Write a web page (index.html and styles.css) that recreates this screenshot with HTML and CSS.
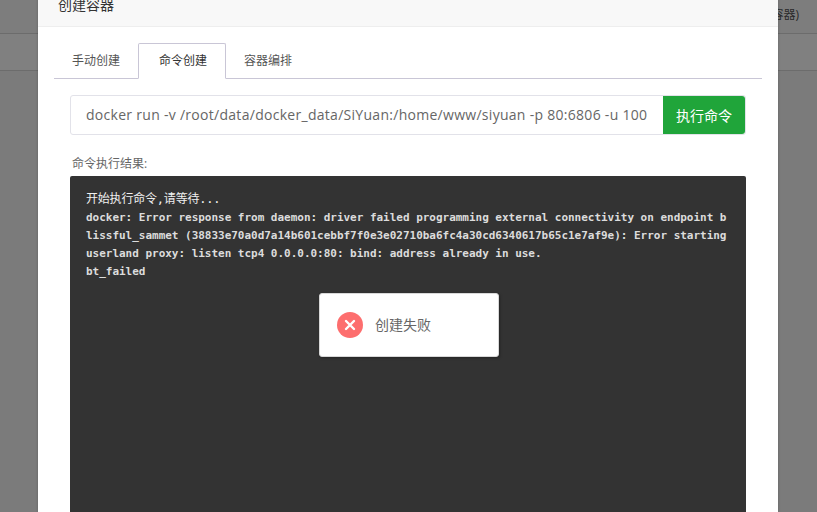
FILE: index.html
```html
<!DOCTYPE html>
<html lang="zh">
<head>
<meta charset="utf-8">
<title>创建容器</title>
<link rel="stylesheet" href="styles.css">
</head>
<body>
<div class="page">
  <div class="bg-row bg-top"><span class="bg-text">容器)</span></div>
  <div class="bg-row bg-mid"></div>
  <div class="bg-row bg-rest"></div>
</div>
<div class="modal">
  <header class="modal-head">创建容器</header>
  <div class="modal-body">
    <nav class="tabs">
      <span class="tab">手动创建</span>
      <span class="tab active">命令创建</span>
      <span class="tab">容器编排</span>
    </nav>
    <div class="cmd">
      <div class="cmd-input">docker run -v /root/data/docker_data/SiYuan:/home/www/siyuan -p 80:6806 -u 100</div>
      <button class="cmd-btn">执行命令</button>
    </div>
    <div class="result-label">命令执行结果:</div>
    <pre class="console"><span class="first">开始执行命令,请等待...</span>
docker: Error response from daemon: driver failed programming external connectivity on endpoint b
lissful_sammet (38833e70a0d7a14b601cebbf7f0e3e02710ba6fc4a30cd6340617b65c1e7af9e): Error starting
userland proxy: listen tcp4 0.0.0.0:80: bind: address already in use.
bt_failed</pre>
  </div>
</div>
<div class="toast">
  <svg class="toast-icon" viewBox="0 0 26 26" width="26" height="26">
    <circle cx="13" cy="13" r="13" fill="#fd6e6e"/>
    <path d="M9 9l8 8M17 9l-8 8" stroke="#fff" stroke-width="2.4" stroke-linecap="round" fill="none"/>
  </svg>
  <span class="toast-text">创建失败</span>
</div>
</body>
</html>
```
FILE: styles.css
```css
* { box-sizing: border-box; }
html, body { margin: 0; height: 100%; overflow: hidden; }
body {
  background: #7b7b7b;
  font-family: "Open Sans", "Noto Sans CJK SC", sans-serif;
  position: relative;
}
.page { position: absolute; inset: 0; }
.bg-row { border-bottom: 1px solid #6c6c6c; background: #808080; }
.bg-top { height: 34px; background: #7d7d7d; text-align: right; padding-right: 18px; }
.bg-mid { height: 37px; }
.bg-rest { height: 64px; background: #7b7b7b; border-bottom: 0; }
.bg-text { font-size: 12px; line-height: 30px; color: #2a2a2a; }
.modal {
  position: absolute;
  top: -16px;
  left: 38px;
  width: 740px;
  height: 528px;
  overflow: hidden;
  background: #fff;
  box-shadow: 0 0 3px rgba(0,0,0,.2);
}
.modal-head {
  height: 43px;
  background: #f8f8f8;
  border-bottom: 1px solid #eee;
  padding-left: 20px;
  font-size: 14px;
  line-height: 42px;
  color: #333;
}
.modal-body { padding: 16px 16px 0; }
.tabs {
  display: flex;
  height: 36px;
  border-bottom: 1px solid #c9c6d6;
}
.tab {
  width: 84px;
  height: 36px;
  text-align: center;
  font-size: 12px;
  line-height: 36px;
  color: #555;
}
.tab.active {
  width: 88px;
  padding-left: 2px;
  background: #fff;
  border: 1px solid #c9c6d6;
  border-bottom-color: #fff;
  border-radius: 2px 2px 0 0;
  line-height: 34px;
  color: #333;
}
.cmd {
  display: flex;
  height: 40px;
  margin: 16px 16px 0;
  border: 1px solid #e2e2e9;
  border-radius: 3px;
}
.cmd-input {
  flex: 1;
  min-width: 0;
  white-space: nowrap;
  padding-left: 15px;
  font-size: 14px;
  letter-spacing: .285px;
  line-height: 38px;
  color: #666;
}
.cmd-btn {
  width: 82px;
  border: 0;
  border-radius: 0 3px 3px 0;
  background: #20a53a;
  color: #fff;
  font: 14px "Open Sans", "Noto Sans CJK SC", sans-serif;
  padding: 0;
}
.result-label {
  margin: 21px 16px 0 18px;
  font-size: 12px;
  line-height: 16px;
  color: #666;
}
.console {
  margin: 4px 16px 0;
  height: 400px;
  background: #333;
  border-radius: 2px;
  padding: 14px 16px;
  font-family: "DejaVu Sans Mono", "Noto Sans CJK SC", monospace;
  font-weight: bold;
  font-size: 11px;
  letter-spacing: -.02px;
  line-height: 18px;
  color: #dcdcdc;
  white-space: pre-wrap;
  word-break: break-all;
}
.first { font-size: 12px; font-weight: normal; color: #f0f0f0; letter-spacing: -.2px; }
.toast {
  position: absolute;
  left: 319px;
  top: 293px;
  width: 180px;
  height: 64px;
  display: flex;
  align-items: center;
  gap: 12px;
  padding-left: 17px;
  background: #fff;
  border: 1px solid #d8d8d8;
  border-radius: 3px;
  box-shadow: 1px 1px 3px rgba(0,0,0,.3);
}
.toast-text { font-size: 14px; color: #666; margin-bottom: 2px; }
```
